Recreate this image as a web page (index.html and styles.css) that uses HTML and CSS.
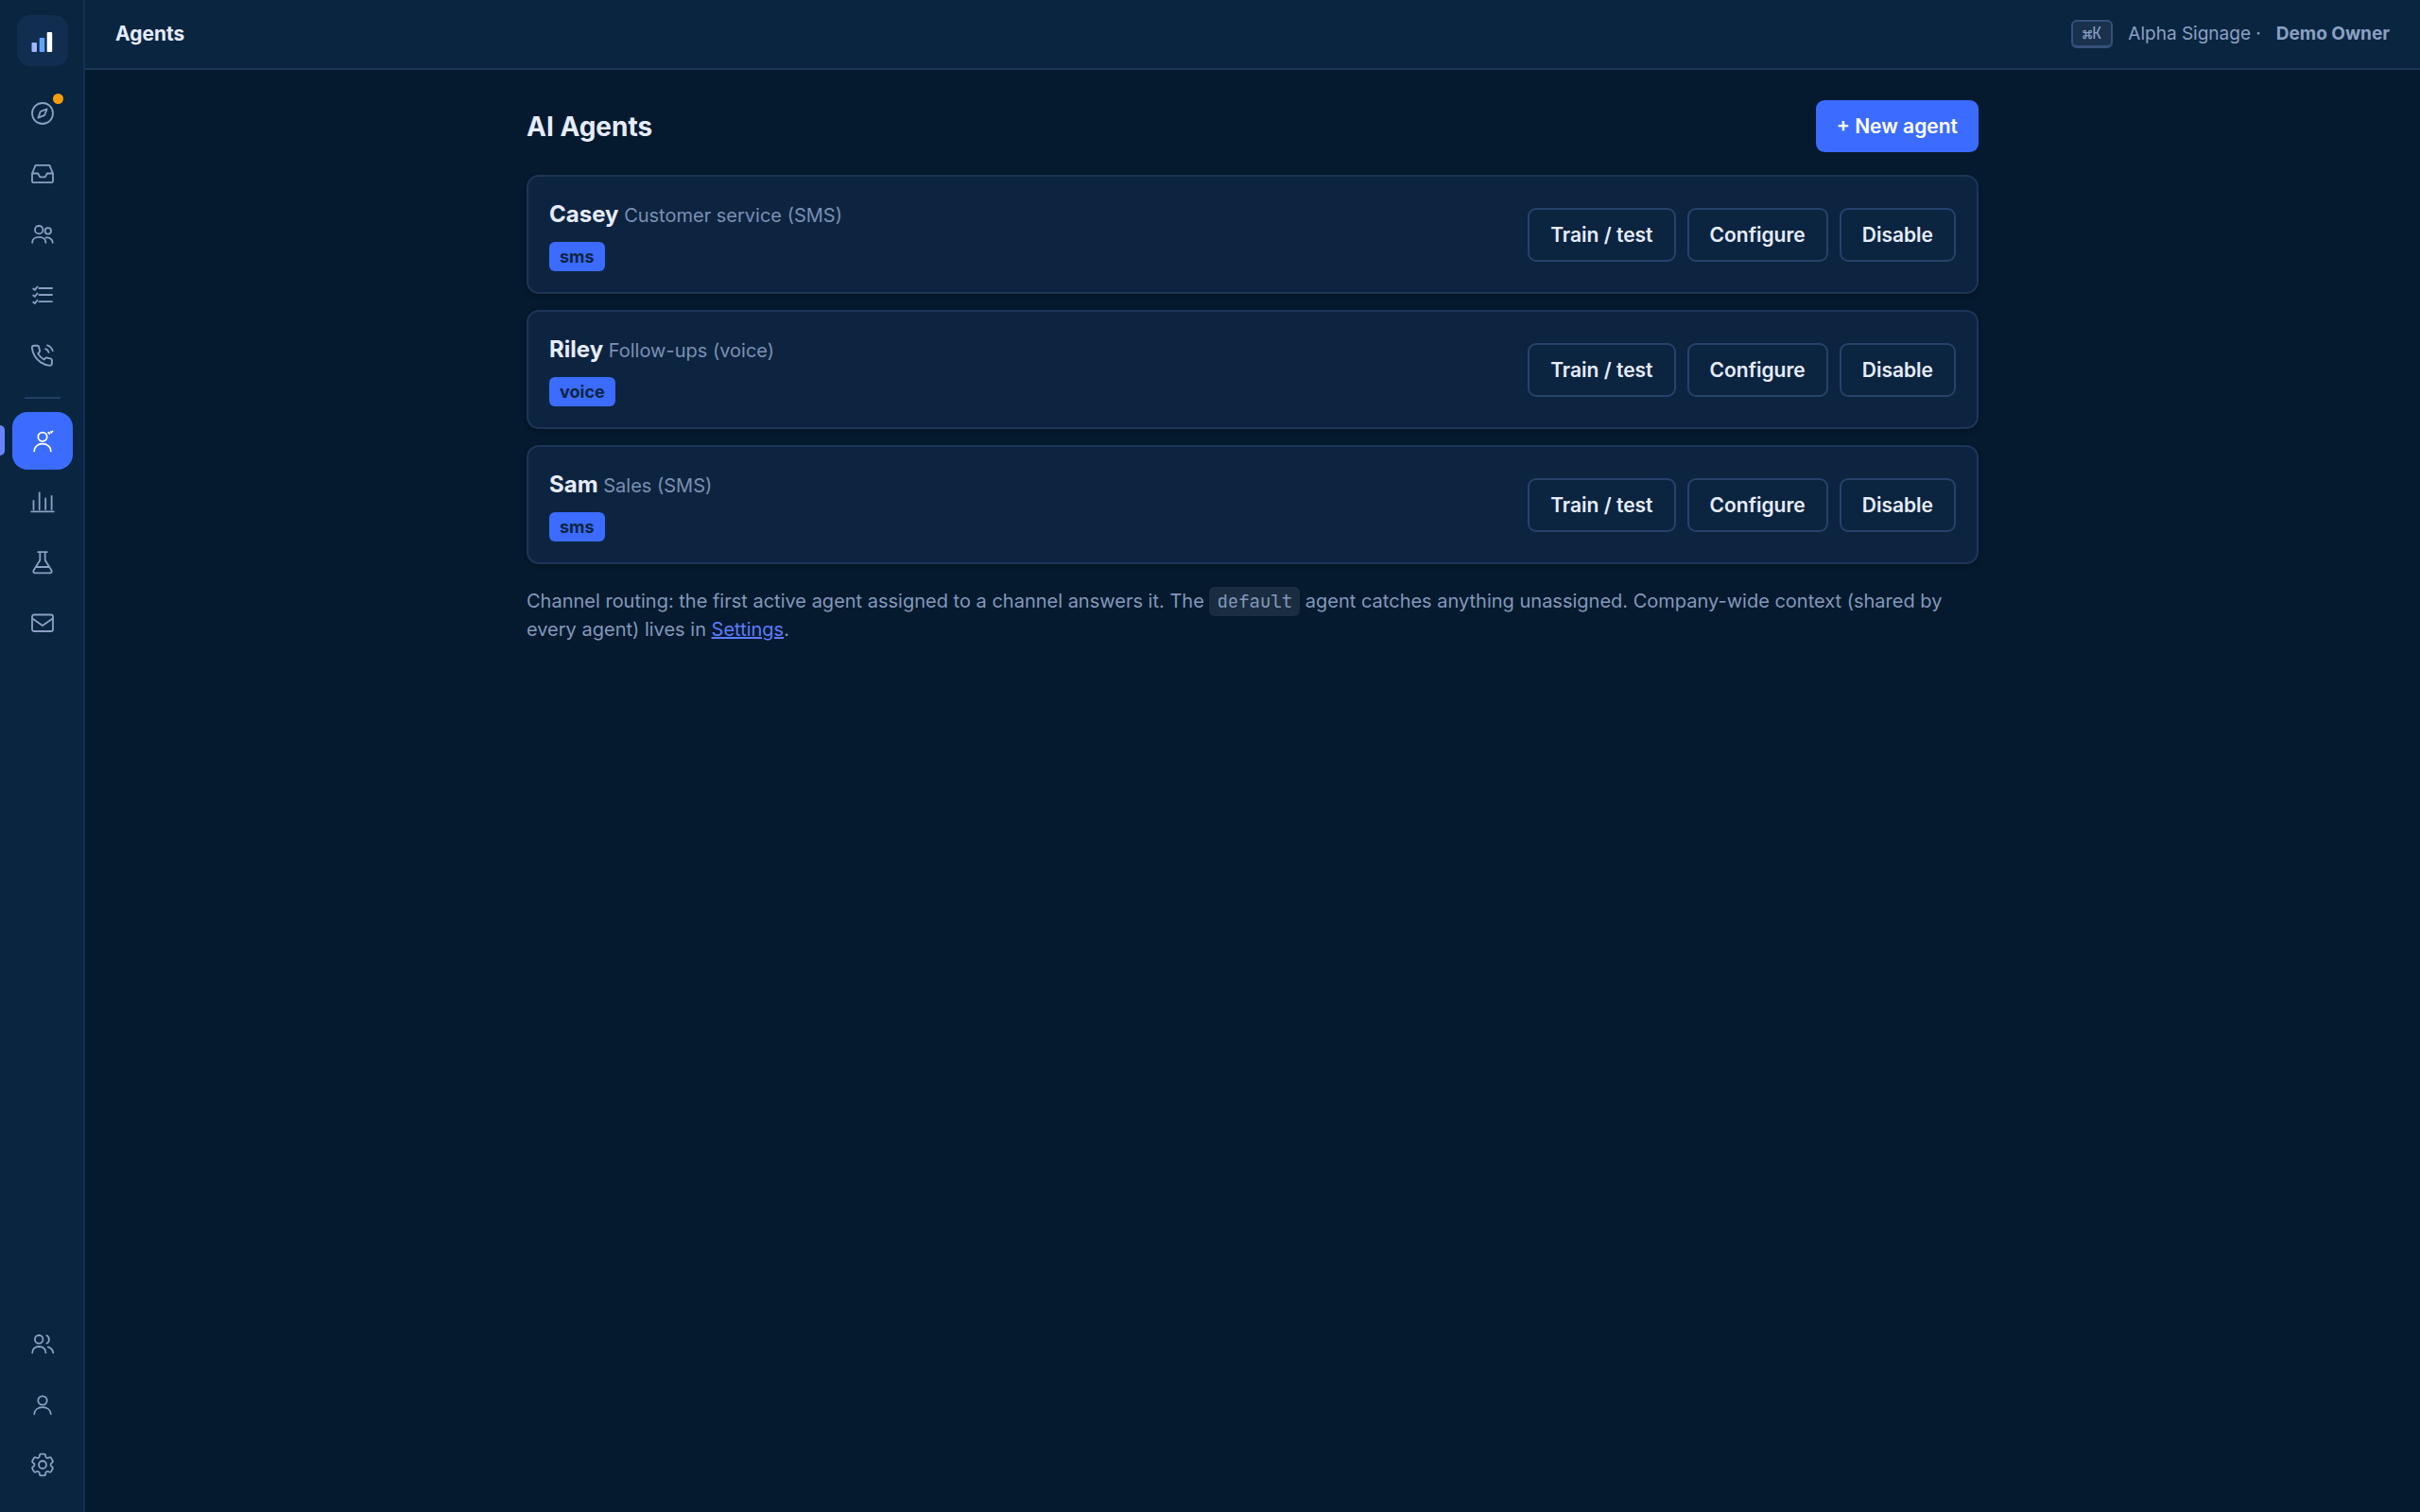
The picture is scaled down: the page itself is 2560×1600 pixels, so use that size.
FILE: index.html
```html
<!DOCTYPE html>
<html lang="en">
<head>
    <meta charset="UTF-8">
    <meta name="viewport" content="width=device-width, initial-scale=1.0">
    <title>Agents</title>
    <link rel="stylesheet" href="styles.css">
</head>
<body>
    <aside class="sidebar">
        <a href="#" class="logo" aria-label="Home">
            <svg viewBox="0 0 54 54" width="54" height="54">
                <rect x="15.5" y="29" width="5.5" height="10" rx="1" fill="#a5b4fc"/>
                <rect x="23.7" y="24" width="5.5" height="15" rx="1" fill="#60a5fa"/>
                <rect x="31.7" y="18" width="5.5" height="21" rx="1" fill="#ffffff"/>
            </svg>
        </a>
        <nav class="side-nav">
            <a href="#" class="nav-item" aria-label="Explore">
                <svg class="icon" viewBox="0 0 32 32">
                    <circle cx="16" cy="16" r="11"/>
                    <path d="M20.6 11.4l-2.3 6.4-6.9 2.8 2.4-6.6z"/>
                </svg>
                <span class="dot"></span>
            </a>
            <a href="#" class="nav-item" aria-label="Inbox">
                <svg class="icon" viewBox="0 0 32 32">
                    <path d="M5 15.5L8.6 6.8h14.8L27 15.5v8.2a1.5 1.5 0 0 1-1.5 1.5h-19A1.5 1.5 0 0 1 5 23.7zM5 15.5h6.2l2 3.9h5.6l2-3.9H27"/>
                </svg>
            </a>
            <a href="#" class="nav-item" aria-label="Contacts">
                <svg class="icon" viewBox="0 0 32 32">
                    <circle cx="12.2" cy="11.2" r="4.2"/>
                    <circle cx="21.8" cy="12.4" r="3.2"/>
                    <path d="M5.2 24.8c0-3.6 2.9-5.9 7.1-5.9s7.1 2.3 7.1 5.9M19.6 19.5c3.9-.5 7.1 1.9 7.1 5.3"/>
                </svg>
            </a>
            <a href="#" class="nav-item" aria-label="Tasks">
                <svg class="icon" viewBox="0 0 32 32">
                    <path d="M12.4 9H26M12.4 16H26M12.4 23.2H26M6.2 9.5l1.6 1.4 2.7-3.4M6.2 16.5l1.6 1.4 2.7-3.4M6.2 23.7l1.6 1.4 2.7-3.4"/>
                </svg>
            </a>
            <a href="#" class="nav-item" aria-label="Calls">
                <svg class="icon" viewBox="0 0 32 32">
                    <path transform="translate(2.6 3.6) scale(1.06)" d="M22 16.92v3a2 2 0 0 1-2.18 2 19.79 19.79 0 0 1-8.63-3.07 19.5 19.5 0 0 1-6-6 19.79 19.79 0 0 1-3.07-8.67A2 2 0 0 1 4.11 2h3a2 2 0 0 1 2 1.72c.127.96.361 1.903.7 2.81a2 2 0 0 1-.45 2.11L8.09 9.91a16 16 0 0 0 6 6l1.27-1.27a2 2 0 0 1 2.11-.45c.907.339 1.85.573 2.81.7A2 2 0 0 1 22 16.92z"/>
                    <path d="M19 9.2a5.5 5.5 0 0 1 3.6 3.7M21 5.4a9.5 9.5 0 0 1 5.8 5.8"/>
                </svg>
            </a>
            <hr class="divider">
            <a href="#" class="nav-item active" aria-label="Agents" aria-current="page">
                <svg class="icon" viewBox="0 0 32 32">
                    <circle cx="16" cy="11.3" r="4.7"/>
                    <path d="M7.2 26.4c0-4.6 3.7-7.7 8.8-7.7s8.8 3.1 8.8 7.7M22.2 6.8l1.2 1M24.8 6l.6.8M26.4 5.4h.2"/>
                </svg>
            </a>
            <a href="#" class="nav-item" aria-label="Analytics">
                <svg class="icon" viewBox="0 0 32 32">
                    <path d="M4.2 26.4h23.6M6.5 14.8V24M12.7 6.5V24M19.2 12.4V24M25.6 9.8V24"/>
                </svg>
            </a>
            <a href="#" class="nav-item" aria-label="Lab">
                <svg class="icon" viewBox="0 0 32 32">
                    <path d="M11.2 5.2h9.6M13.3 5.2v8.5L6.6 24.4c-.9 1.6 0 2.9 1.7 2.9h15.4c1.7 0 2.6-1.3 1.7-2.9l-6.7-10.7V5.2M9.2 21h13.6"/>
                </svg>
            </a>
            <a href="#" class="nav-item" aria-label="Mail">
                <svg class="icon" viewBox="0 0 32 32">
                    <rect x="5" y="7.5" width="22" height="17.5" rx="2"/>
                    <path d="M5.3 11.5L16 19l10.7-7.5"/>
                </svg>
            </a>
        </nav>
        <nav class="side-nav">
            <a href="#" class="nav-item" aria-label="Team">
                <svg class="icon" viewBox="0 0 32 32">
                    <circle cx="12.2" cy="11.3" r="4.3"/>
                    <path d="M5.2 25.5c0-3.9 2.9-6.5 7.1-6.5s7.1 2.6 7.1 6.5M20.4 7.3c3.3 1.5 3.3 6.7 0 8.2M21.8 19.4c3.1.8 5 3 5.4 6.1"/>
                </svg>
            </a>
            <a href="#" class="nav-item" aria-label="Profile">
                <svg class="icon" viewBox="0 0 32 32">
                    <circle cx="16" cy="12" r="4.7"/>
                    <path d="M7.2 26.4c.4-4.4 3.9-7.2 8.8-7.2s8.4 2.8 8.8 7.2"/>
                </svg>
            </a>
            <a href="#" class="nav-item" aria-label="Settings">
                <svg class="icon" viewBox="0 0 32 32">
                    <path transform="translate(.76 .76) scale(1.27)" stroke-width="1.4" d="M9.594 3.94c.09-.542.56-.94 1.11-.94h2.593c.55 0 1.02.398 1.11.94l.213 1.281c.063.374.313.686.645.87.074.04.147.083.22.127.325.196.72.257 1.075.124l1.217-.456a1.125 1.125 0 0 1 1.37.49l1.296 2.247a1.125 1.125 0 0 1-.26 1.431l-1.003.827c-.293.241-.438.613-.43.992a7.723 7.723 0 0 1 0 .255c-.008.378.137.75.43.991l1.004.827c.424.35.534.955.26 1.43l-1.298 2.247a1.125 1.125 0 0 1-1.369.491l-1.217-.456c-.355-.133-.75-.072-1.076.124a6.47 6.47 0 0 1-.22.128c-.331.183-.581.495-.644.869l-.213 1.281c-.09.543-.56.94-1.11.94h-2.594c-.55 0-1.019-.398-1.11-.94l-.213-1.281c-.062-.374-.312-.686-.644-.87a6.52 6.52 0 0 1-.22-.127c-.325-.196-.72-.257-1.076-.124l-1.217.456a1.125 1.125 0 0 1-1.369-.49l-1.297-2.247a1.125 1.125 0 0 1 .26-1.431l1.004-.827c.292-.24.437-.613.43-.991a6.932 6.932 0 0 1 0-.255c.007-.38-.138-.751-.43-.992l-1.004-.827a1.125 1.125 0 0 1-.26-1.43l1.297-2.247a1.125 1.125 0 0 1 1.37-.491l1.216.456c.356.133.751.072 1.076-.124.072-.044.146-.086.22-.128.332-.183.582-.495.644-.869l.214-1.28z"/>
                    <circle cx="16" cy="16" r="4"/>
                </svg>
            </a>
        </nav>
    </aside>

    <div class="page">
        <header class="top-bar">
            <span class="top-title">Agents</span>
            <div class="top-right">
                <kbd>⌘K</kbd>
                <span>Alpha Signage ·</span>
                <strong>Demo Owner</strong>
            </div>
        </header>

        <main class="content">
            <div class="page-head">
                <h1>AI Agents</h1>
                <button type="button" class="btn btn-primary">+ New agent</button>
            </div>

            <section class="agents">
                <article class="agent-card">
                    <div>
                        <h2>Casey <span class="role">Customer service (SMS)</span></h2>
                        <span class="tag">sms</span>
                    </div>
                    <div class="actions">
                        <button type="button" class="btn">Train / test</button>
                        <button type="button" class="btn">Configure</button>
                        <button type="button" class="btn">Disable</button>
                    </div>
                </article>
                <article class="agent-card">
                    <div>
                        <h2>Riley <span class="role">Follow-ups (voice)</span></h2>
                        <span class="tag">voice</span>
                    </div>
                    <div class="actions">
                        <button type="button" class="btn">Train / test</button>
                        <button type="button" class="btn">Configure</button>
                        <button type="button" class="btn">Disable</button>
                    </div>
                </article>
                <article class="agent-card">
                    <div>
                        <h2>Sam <span class="role">Sales (SMS)</span></h2>
                        <span class="tag">sms</span>
                    </div>
                    <div class="actions">
                        <button type="button" class="btn">Train / test</button>
                        <button type="button" class="btn">Configure</button>
                        <button type="button" class="btn">Disable</button>
                    </div>
                </article>
            </section>

            <p class="note">Channel routing: the first active agent assigned to a channel answers it. The <code>default</code> agent catches anything unassigned. Company-wide context (shared by every agent) lives in <a href="#">Settings</a>.</p>
        </main>
    </div>
</body>
</html>
```
FILE: styles.css
```css
* {
    margin: 0;
    padding: 0;
    box-sizing: border-box;
}

body {
    display: flex;
    min-height: 100vh;
    background-color: #051a2e;
    color: #e6ecff;
    font-family: Inter, sans-serif;
    font-size: 20px;
    line-height: 30px;
}

/* sidebar */

.sidebar {
    display: flex;
    flex-direction: column;
    align-items: center;
    flex: none;
    width: 90px;
    padding: 16px 0 20px 2px;
    background-color: #0a2540;
    border-right: 2px solid #142f50;
}

.logo {
    display: block;
    width: 54px;
    height: 54px;
    margin-bottom: 19px;
    border-radius: 14px;
    background-color: #112d50;
}

.logo svg {
    display: block;
}

.side-nav {
    display: flex;
    flex-direction: column;
    align-items: center;
    gap: 3px;
    width: 100%;
}

.side-nav:last-child {
    margin-top: auto;
}

.nav-item {
    position: relative;
    display: flex;
    align-items: center;
    justify-content: center;
    width: 64px;
    height: 61px;
    border-radius: 16px;
    color: #8ba0c4;
}

.nav-item.active {
    background-color: #3b6cff;
    color: #fff;
}

.nav-item.active::before {
    content: "";
    position: absolute;
    left: -13px;
    top: 14px;
    width: 5px;
    height: 32px;
    border-radius: 0 5px 5px 0;
    background-color: #6485ff;
}

.icon {
    width: 32px;
    height: 32px;
    fill: none;
    stroke: currentColor;
    stroke-width: 1.8;
    stroke-linecap: round;
    stroke-linejoin: round;
}

.dot {
    position: absolute;
    top: 10px;
    right: 10px;
    width: 11px;
    height: 11px;
    border-radius: 50%;
    background-color: #f59e0b;
}

.divider {
    width: 38px;
    height: 2px;
    margin: 11px 0;
    border: none;
    background-color: #223f66;
}

/* top bar */

.page {
    flex: 1;
    min-width: 0;
}

.top-bar {
    display: flex;
    align-items: center;
    justify-content: space-between;
    height: 74px;
    padding: 0 32px;
    background-color: #0a2540;
    border-bottom: 2px solid #1c3657;
}

.top-title {
    font-size: 21px;
    font-weight: 700;
}

.top-right {
    display: flex;
    align-items: center;
    gap: 16px;
    color: #8ba0c4;
    font-size: 19px;
}

.top-right strong {
    font-weight: 700;
}

kbd {
    padding: 0 10px;
    border: 2px solid #34507a;
    border-bottom-width: 3px;
    border-radius: 6px;
    background-color: #1a314d;
    font-family: "JetBrains Mono", "DejaVu Sans Mono", monospace;
    font-size: 17px;
    line-height: 25px;
}

/* content */

.content {
    max-width: 1600px;
    margin: 0 auto;
    padding: 32px;
}

.page-head {
    display: flex;
    align-items: center;
    justify-content: space-between;
    margin-bottom: 24px;
}

h1 {
    font-size: 28px;
    font-weight: 700;
    line-height: 40px;
}

.btn {
    padding: 13px 22px;
    border: 2px solid #26426a;
    border-radius: 9px;
    background-color: #0b2440;
    color: #e6ecff;
    font-family: inherit;
    font-size: 21px;
    font-weight: 600;
    line-height: 27px;
    cursor: pointer;
}

.btn-primary {
    padding: 14px 22px;
    border: none;
    background-color: #3b6cff;
    color: #fff;
}

.agents {
    display: flex;
    flex-direction: column;
    gap: 17px;
}

.agent-card {
    display: flex;
    align-items: center;
    justify-content: space-between;
    padding: 22px;
    border: 2px solid #1d3557;
    border-radius: 13px;
    background-color: #0d2440;
    box-shadow: 0 2px 4px rgba(0, 0, 0, .25);
}

h2 {
    margin-bottom: 10px;
    font-size: 24px;
    font-weight: 700;
    line-height: 36px;
}

.role {
    color: #7b8fb3;
    font-size: 20px;
    font-weight: 400;
}

.tag {
    display: block;
    width: fit-content;
    padding: 0 11px;
    border-radius: 6px;
    background-color: #3b6cff;
    color: #0a2540;
    font-size: 18px;
    font-weight: 700;
    line-height: 31px;
}

.actions {
    display: flex;
    gap: 12px;
}

.note {
    margin-top: 24px;
    color: #8398bb;
}

.note code {
    padding: 3px 8px;
    border-radius: 6px;
    background-color: #1a2c40;
    font-family: "JetBrains Mono", "DejaVu Sans Mono", monospace;
    font-size: 19px;
    line-height: 1;
}

.note a {
    color: #5b7dff;
}
```
